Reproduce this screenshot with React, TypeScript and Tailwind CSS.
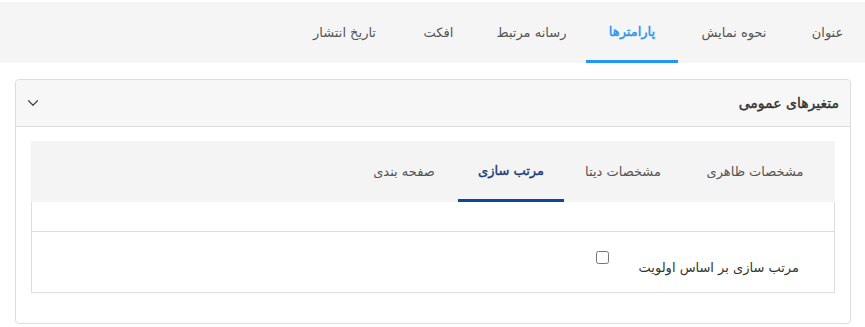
import { ChevronDown } from "lucide-react";

const topTabs = [
  { label: "عنوان", w: "w-[75px]" },
  { label: "نحوه نمایش", w: "w-[112px]" },
  { label: "پارامترها", w: "w-[92px]", active: true },
  { label: "رسانه مرتبط", w: "w-[109px]" },
  { label: "افکت", w: "w-[77px]" },
  { label: "تاریخ انتشار", w: "w-[111px]" },
];

const innerTabs = [
  { label: "مشخصات ظاهری", w: "w-[146px]" },
  { label: "مشخصات دیتا", w: "w-[118px]" },
  { label: "مرتب سازی", w: "w-[106px]", active: true },
  { label: "صفحه بندی", w: "w-[108px]" },
];

export default function App() {
  return (
    <div dir="rtl" className="w-[865px] h-[327px] overflow-hidden bg-white font-['DejaVu_Sans',sans-serif]">
      {/* top nav */}
      <nav className="mt-[2px] h-[61px] bg-[#f5f5f5] flex">
        {topTabs.map((t) =>
          t.active ? (
            <div key={t.label} className={`${t.w} h-full pt-[1px] flex items-center justify-center border-b-[3px] border-[#2196f3] text-[13px] text-[#2196f3] [-webkit-text-stroke:0.4px_#2196f3]`}>
              {t.label}
            </div>
          ) : (
            <div key={t.label} className={`${t.w} h-full flex items-center justify-center text-[13px] text-[#555]`}>
              {t.label}
            </div>
          )
        )}
      </nav>

      {/* card */}
      <div className="mt-[16px] ml-[15px] mr-[14px] border border-[#dddddd] rounded-[4px]">
        <div className="h-[47px] bg-[#f7f7f7] border-b border-[#dddddd] rounded-t-[4px] flex items-center justify-between pr-[11px] pl-[8px]">
          <span className="text-[14px] text-[#333] [-webkit-text-stroke:0.4px_#333]">متغیرهای عمومی</span>
          <ChevronDown size={18} strokeWidth={1.6} className="text-[#444]" />
        </div>

        <div className="px-[15px] pt-[14px] pb-[30px]">
          <div className="h-[61px] bg-[#f4f4f4] flex pr-[7px]">
            {innerTabs.map((t) =>
              t.active ? (
                <div key={t.label} className={`${t.w} h-full pt-[1px] flex items-center justify-center border-b-[3px] border-[#0d47a1] text-[13px] text-[#1a3a7a] [-webkit-text-stroke:0.4px_#1a3a7a]`}>
                  {t.label}
                </div>
              ) : (
                <div key={t.label} className={`${t.w} h-full flex items-center justify-center text-[13px] text-[#555]`}>
                  {t.label}
                </div>
              )
            )}
          </div>
          <div className="border-x border-b border-[#dddddd]">
            <div className="h-[30px] border-b border-[#dddddd]" />
            <div className="h-[60px] flex items-start pr-[35px] pt-[19px]">
              <label className="w-[190px] mt-[7px] text-[13px] text-[#333]">مرتب سازی بر اساس اولویت</label>
              <input type="checkbox" className="w-[13px] h-[13px] m-0" />
            </div>
          </div>
        </div>
      </div>
    </div>
  );
}
